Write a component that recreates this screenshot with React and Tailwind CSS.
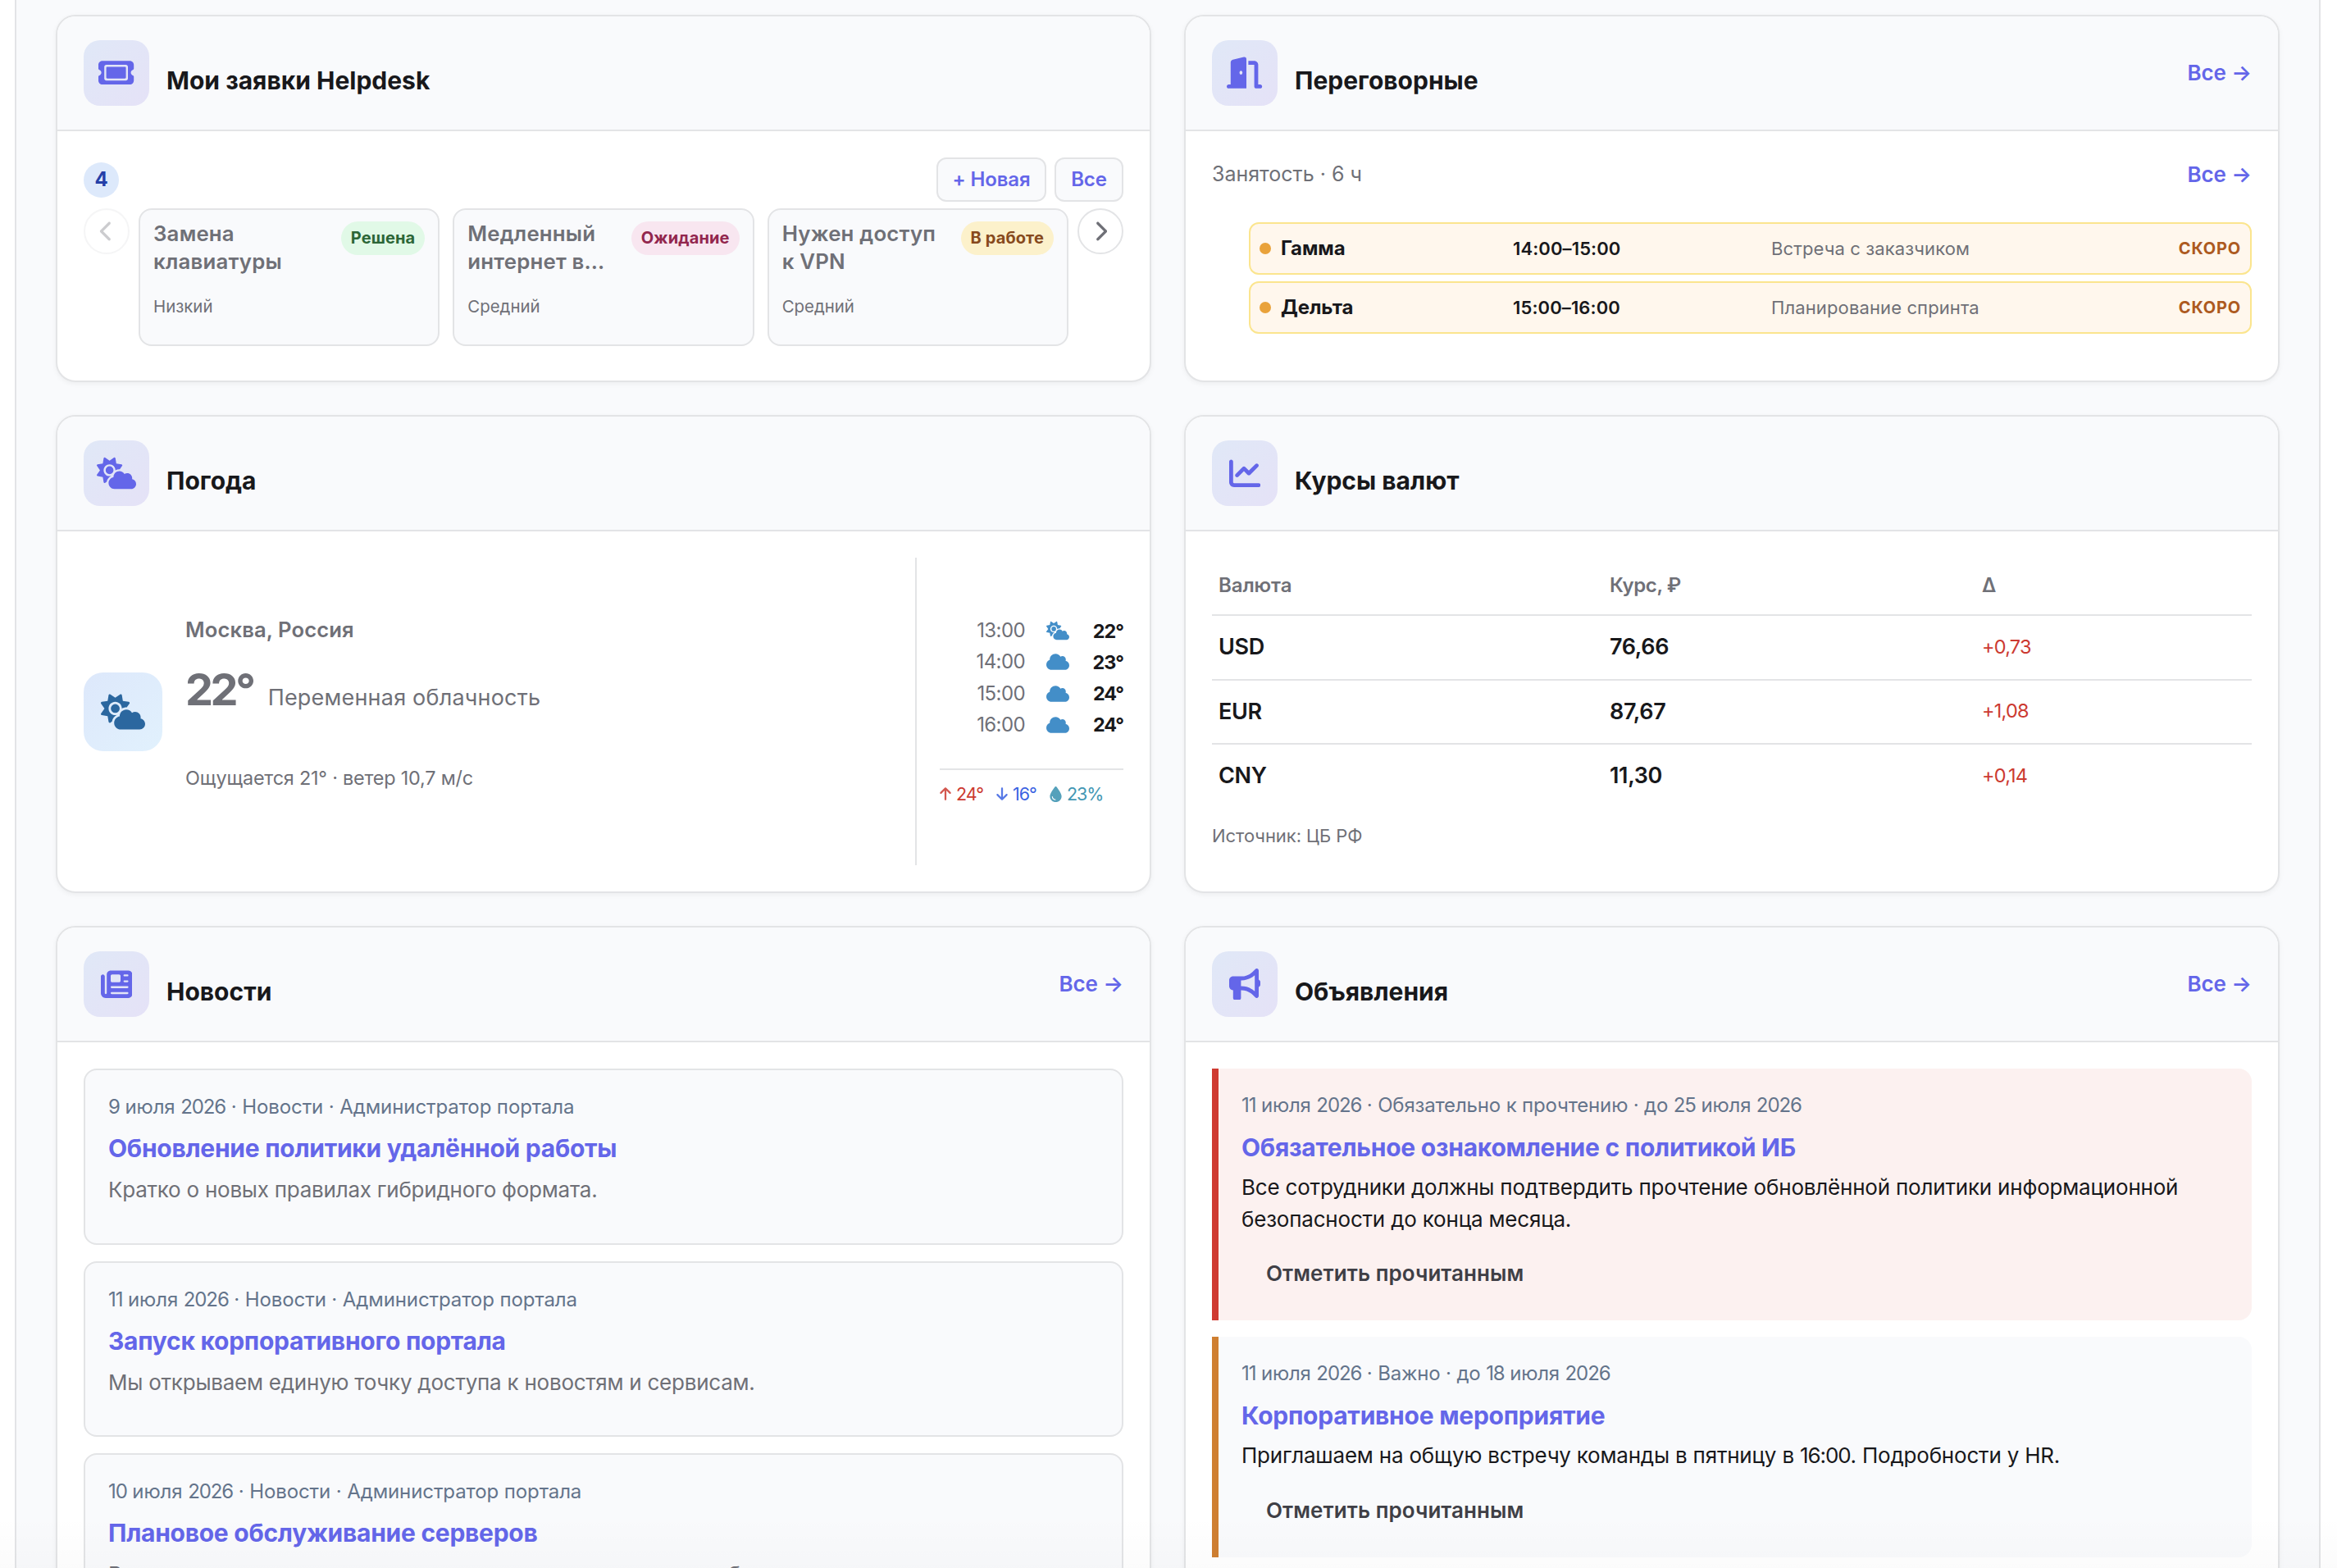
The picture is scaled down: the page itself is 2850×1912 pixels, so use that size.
import {
  FaArrowDown,
  FaArrowUp,
  FaBullhorn,
  FaChartLine,
  FaChevronLeft,
  FaChevronRight,
  FaCloud,
  FaCloudSun,
  FaDoorOpen,
  FaDroplet,
  FaNewspaper,
  FaTicket,
} from "react-icons/fa6";

const tickets = [
  {
    title: "Замена\nклавиатуры",
    status: "Решена",
    badge: "bg-[#e1f9e7] text-[#2c6637]",
    priority: "Низкий",
  },
  {
    title: "Медленный\nинтернет в…",
    status: "Ожидание",
    badge: "bg-[#f8e6f0] text-[#92264e]",
    priority: "Средний",
  },
  {
    title: "Нужен доступ\nк VPN",
    status: "В работе",
    badge: "bg-[#fcf1cb] text-[#874a1d]",
    priority: "Средний",
  },
];

const meetings = [
  { room: "Гамма", time: "14:00–15:00", topic: "Встреча с заказчиком" },
  { room: "Дельта", time: "15:00–16:00", topic: "Планирование спринта" },
];

const forecast = [
  { time: "13:00", icon: FaCloudSun, temp: "22°" },
  { time: "14:00", icon: FaCloud, temp: "23°" },
  { time: "15:00", icon: FaCloud, temp: "24°" },
  { time: "16:00", icon: FaCloud, temp: "24°" },
];

const rates = [
  { code: "USD", rate: "76,66", delta: "+0,73" },
  { code: "EUR", rate: "87,67", delta: "+1,08" },
  { code: "CNY", rate: "11,30", delta: "+0,14" },
];

const news = [
  {
    meta: "9 июля 2026 · Новости · Администратор портала",
    title: "Обновление политики удалённой работы",
    text: "Кратко о новых правилах гибридного формата.",
  },
  {
    meta: "11 июля 2026 · Новости · Администратор портала",
    title: "Запуск корпоративного портала",
    text: "Мы открываем единую точку доступа к новостям и сервисам.",
  },
  {
    meta: "10 июля 2026 · Новости · Администратор портала",
    title: "Плановое обслуживание серверов",
    text: "В воскресенье возможны кратковременные перерывы в работе.",
  },
];

const announcements = [
  {
    meta: "11 июля 2026 · Обязательно к прочтению · до 25 июля 2026",
    title: "Обязательное ознакомление с политикой ИБ",
    text: "Все сотрудники должны подтвердить прочтение обновлённой политики информационной безопасности до конца месяца.",
    tone: "border-[#cf3a31] bg-[#fcf1f0]",
  },
  {
    meta: "11 июля 2026 · Важно · до 18 июля 2026",
    title: "Корпоративное мероприятие",
    text: "Приглашаем на общую встречу команды в пятницу в 16:00. Подробности у HR.",
    tone: "border-[#cf7f31] bg-[#f9fafc]",
  },
];

// Sets the numbers inside a text a little tighter than the words
function TightNumbers({ children }) {
  return children.split(/(\d[\d:]*)/).map((part, i) =>
    i % 2 ? (
      <span key={i} className="tracking-[-1.1px]">
        {part}
      </span>
    ) : (
      part
    ),
  );
}

function AllLink() {
  return (
    <a className="text-[26px] leading-[41px] font-semibold tracking-[-0.1px] whitespace-nowrap text-[#6466e9]">
      Все →
    </a>
  );
}

function Widget({ icon: Icon, iconSize = "size-[38.4px]", title, link, children }) {
  return (
    <section className="flex flex-col overflow-hidden rounded-3xl border-2 border-[#e3e4e6] bg-white shadow-[0_2px_6px_rgba(0,0,0,0.05)]">
      <header className="flex h-[140px] shrink-0 items-center border-b-2 border-[#e3e4e6] bg-[#f9fafc] px-8">
        <div className="flex size-20 items-center justify-center rounded-[20px] bg-linear-135 from-[#e0e8f7] to-[#e5e2f7] text-[#6466e9]">
          <Icon className={iconSize} />
        </div>
        <h2 className="mt-[18px] ml-[21px] text-[30px] leading-10 font-bold text-[#18181b]">
          {title}
        </h2>
        {link && (
          <div className="-mt-0.5 ml-auto">
            <AllLink />
          </div>
        )}
      </header>
      <div className="flex-1 p-8">{children}</div>
    </section>
  );
}

function Helpdesk() {
  return (
    <Widget icon={FaTicket} iconSize="size-[43.2px]" title="Мои заявки Helpdesk">
      <div className="flex items-center gap-2.5 text-2xl font-semibold tracking-[-0.1px] text-[#6466e9]">
        <span className="mr-auto flex size-[43px] items-center justify-center rounded-full bg-[#dde9fb] font-bold text-[#243fa8]">
          4
        </span>
        <button className="flex h-[54px] w-[134px] items-center justify-center rounded-xl border-2 border-[#e3e4e6] bg-[#f9fafc] whitespace-nowrap">
          + Новая
        </button>
        <button className="flex h-[54px] w-[84px] items-center justify-center rounded-xl border-2 border-[#e3e4e6] bg-[#f9fafc]">
          Все
        </button>
      </div>
      <div className="mt-2 flex items-start gap-[11px]">
        <button className="flex size-14 shrink-0 items-center justify-center rounded-full border-2 border-[#e3e4e6] text-[#6f7077] opacity-35">
          <FaChevronLeft className="size-[26px]" />
        </button>
        {/* Tickets */}
        <div className="grid flex-1 grid-cols-3 gap-4">
          {tickets.map((t) => (
            <div
              key={t.title}
              className="h-[168px] rounded-2xl border-2 border-[#e3e4e6] bg-[#f9fafc] px-4 pt-3.5 text-[#6f7077]"
            >
              <div className="flex items-start justify-between">
                <h3 className="-mt-0.5 text-[25.8px] leading-[34px] font-semibold tracking-[0.2px] whitespace-pre">
                  {t.title}
                </h3>
                <span
                  className={`flex h-[41px] items-center rounded-full px-3 pb-px text-xl font-bold tracking-[0.12px] whitespace-nowrap ${t.badge}`}
                >
                  {t.status}
                </span>
              </div>
              <p className="mt-[23px] text-[20.4px] leading-[30px]">{t.priority}</p>
            </div>
          ))}
        </div>
        {/* End Tickets */}
        <button className="flex size-14 shrink-0 items-center justify-center rounded-full border-2 border-[#e3e4e6] text-[#6f7077]">
          <FaChevronRight className="size-[26px]" />
        </button>
      </div>
    </Widget>
  );
}

function Meetings() {
  return (
    <Widget icon={FaDoorOpen} iconSize="size-[43.2px]" title="Переговорные" link>
      <div className="flex items-center justify-between">
        <span className="text-[25px] leading-[41px] text-[#6f7077]">Занятость · 6 ч</span>
        <AllLink />
      </div>
      <ul className="mt-[38px] ml-[45px] space-y-2">
        {meetings.map((m) => (
          <li
            key={m.room}
            className="grid h-16 grid-cols-[14px_283px_315px_1fr_auto] items-center rounded-xl border-2 border-[#fbe58e] bg-[#fff7ed] px-[11px] text-[22px] tracking-[0.12px]"
          >
            <span className="size-3.5 rounded-full bg-[#e9a23b]" />
            <span className="pl-3 text-2xl font-bold tracking-[-0.1px] text-[#18181b]">
              {m.room}
            </span>
            <span className="pl-3 font-semibold text-[#18181b]">{m.time}</span>
            <span className="pl-3 text-[#6f7077]">{m.topic}</span>
            <span className="text-[20px] font-bold tracking-[0.8px] text-[#ad5a1f]">
              СКОРО
            </span>
          </li>
        ))}
      </ul>
    </Widget>
  );
}

function Weather() {
  return (
    <Widget icon={FaCloudSun} iconSize="size-12" title="Погода">
      <div className="flex h-[375px] text-[#6f7077]">
        <div className="flex flex-1 items-center">
          <div className="flex size-24 items-center justify-center rounded-3xl bg-linear-135 from-[#dde8fb] to-[#e1f1fd] text-[#2b679f]">
            <FaCloudSun className="size-[54px]" />
          </div>
          <div className="ml-7 pb-[20px]">
            <p className="text-[25.6px] leading-[42px] font-semibold tracking-[0.12px]">
              Москва, Россия
            </p>
            <div className="mt-[18px] flex items-baseline">
              <span className="text-[54px] leading-[68px] font-bold tracking-[-3.4px]">
                22°
              </span>
              <span className="ml-[18px] text-[27px] tracking-[0.2px]">
                Переменная облачность
              </span>
            </div>
            <p className="mt-[54px] text-[23.4px] leading-10 tracking-[-0.2px]">
              Ощущается 21° · ветер 10,7 м/с
            </p>
          </div>
        </div>
        <div className="flex w-[254px] flex-col border-l-2 border-[#e3e4e6] pt-[70px] pl-7">
          {forecast.map(({ time, icon: Icon, temp }) => (
            <div
              key={time}
              className="flex h-[38.3px] items-center text-2xl tracking-[-0.6px]"
            >
              <span className="w-[104px] text-right">{time}</span>
              <Icon className="ml-[26px] size-7 text-[#438ec8]" />
              <span className="ml-auto text-[23.4px] font-bold tracking-[-1px] text-[#18181b]">
                {temp}
              </span>
            </div>
          ))}
          <div className="mt-[34px] flex items-center border-t-2 border-[#e3e4e6] pt-[11px] text-[21.5px] leading-9 tracking-[-1px]">
            <span className="flex items-center gap-1 text-[#cc3a31]">
              <FaArrowUp className="-ml-0.5 size-[18px] opacity-85" />
              24°
            </span>
            <span className="ml-4 flex items-center gap-1 text-[#3a62e2]">
              <FaArrowDown className="-ml-0.5 size-[18px] opacity-85" />
              16°
            </span>
            <span className="ml-3.5 flex items-center gap-1 text-[#4397b4]">
              <FaDroplet className="size-[19px] opacity-90" />
              23%
            </span>
          </div>
        </div>
      </div>
    </Widget>
  );
}

function Rates() {
  return (
    <Widget icon={FaChartLine} title="Курсы валют">
      <div className="grid h-[71px] grid-cols-[477px_454px_1fr] items-center border-b-2 border-[#e3e4e6] pb-[2px] text-2xl font-semibold tracking-[-0.1px] text-[#6f7077]">
        <span className="pl-2">Валюта</span>
        <span className="pl-2 tracking-[-0.4px]">Курс, ₽</span>
        <span className="pl-2">Δ</span>
      </div>
      {rates.map((r) => (
        <div
          key={r.code}
          className="grid h-[78.5px] grid-cols-[477px_454px_1fr] items-center border-b-2 border-[#e3e4e6] text-[27px] font-semibold tracking-[-0.35px] text-[#18181b] last-of-type:border-transparent"
        >
          <span className="pl-2">{r.code}</span>
          <span className="pl-2">{r.rate}</span>
          <span className="pb-0.5 pl-2 text-[23.5px] font-normal tracking-[-0.8px] text-[#cc3a31]">
            {r.delta}
          </span>
        </div>
      ))}
      <p className="mt-[13px] text-[22px] leading-[38px] tracking-[-0.05px] text-[#6f7077]">
        Источник: ЦБ РФ
      </p>
    </Widget>
  );
}

function News() {
  return (
    <Widget icon={FaNewspaper} title="Новости" link>
      <div className="space-y-5">
        {news.map((n) => (
          <article
            key={n.title}
            className="h-[214.5px] rounded-2xl border-2 border-[#e3e4e6] bg-[#f9fafc] px-7 pt-[27px]"
          >
            <p className="text-2xl leading-9 tracking-[-0.1px] text-[#64748b]">
              <TightNumbers>{n.meta}</TightNumbers>
            </p>
            <h3 className="mt-2.5 text-[30px] leading-[44px] font-bold tracking-[-0.27px] text-[#6466e9]">
              {n.title}
            </h3>
            <p className="mt-2.5 text-[26px] leading-[38.5px] tracking-[-0.24px] text-[#6f7077]">
              {n.text}
            </p>
          </article>
        ))}
      </div>
    </Widget>
  );
}

function Announcements() {
  return (
    <Widget icon={FaBullhorn} title="Объявления" link>
      <div className="space-y-5">
        {announcements.map((a) => (
          <article
            key={a.title}
            className={`rounded-r-2xl border-l-8 px-7 pt-[27px] pb-[39px] ${a.tone}`}
          >
            <p className="text-2xl leading-9 tracking-[-0.17px] text-[#64748b]">
              <TightNumbers>{a.meta}</TightNumbers>
            </p>
            <h3 className="mt-[11px] text-[30px] leading-[44px] font-bold tracking-[-0.25px] text-[#6466e9]">
              {a.title}
            </h3>
            <p className="mt-2 text-[26px] leading-[38.5px] tracking-[-0.2px] text-[#18181b]">
              <TightNumbers>{a.text}</TightNumbers>
            </p>
            <button className="mt-[29px] block px-[30px] text-[26px] leading-9 font-semibold tracking-[0.07px] text-[#3f3f46]">
              Отметить прочитанным
            </button>
          </article>
        ))}
      </div>
    </Widget>
  );
}

export default function App() {
  return (
    <div className="relative h-[1912px] overflow-hidden bg-white pr-5 pl-[18px] font-['Inter',sans-serif]">
      <main className="grid h-[2100px] grid-cols-2 grid-rows-[448px_583px_1fr] gap-10 border-x-2 border-[#e3e4e6] bg-[#f9fafc] px-12 pt-[18px]">
        <Helpdesk />
        <Meetings />
        <Weather />
        <Rates />
        <News />
        <Announcements />
      </main>
      {/* Bottom fade */}
      <div className="pointer-events-none absolute bottom-0 left-0 h-16 w-full bg-linear-to-t from-black/[0.015] to-transparent" />
    </div>
  );
}
